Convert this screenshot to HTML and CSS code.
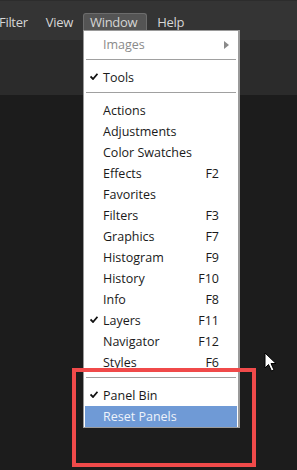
FILE: index.html
```
<!DOCTYPE html>
<html>
<head>
<meta charset="utf-8">
<link rel="stylesheet" href="styles.css">
</head>
<body>
<div class="app">
  <div class="menubar">
    <span class="mb-item first">Filter</span>
    <span class="mb-item">View</span>
    <span class="mb-item active">Window</span>
    <span class="mb-item">Help</span>
  </div>
  <div class="toolbar"></div>
  <div class="workspace"></div>

  <div class="dropdown">
    <div class="row disabled"><span class="label">Images</span><svg class="sub" width="5" height="8" viewBox="0 0 5 8"><path d="M0 0L5 4L0 8Z" fill="#8a8a8a"/></svg></div>
    <div class="sep"></div>
    <div class="row"><svg class="check" width="8" height="7" viewBox="0 0 8 7"><path d="M0.5 3.5L3 6L7.5 0.8" stroke="#111" stroke-width="1.8" fill="none"/></svg><span class="label">Tools</span></div>
    <div class="sep"></div>
    <div class="row"><span class="label">Actions</span></div>
    <div class="row"><span class="label">Adjustments</span></div>
    <div class="row"><span class="label">Color Swatches</span></div>
    <div class="row"><span class="label">Effects</span><span class="key">F2</span></div>
    <div class="row"><span class="label">Favorites</span></div>
    <div class="row"><span class="label">Filters</span><span class="key">F3</span></div>
    <div class="row"><span class="label">Graphics</span><span class="key">F7</span></div>
    <div class="row"><span class="label">Histogram</span><span class="key">F9</span></div>
    <div class="row"><span class="label">History</span><span class="key">F10</span></div>
    <div class="row"><span class="label">Info</span><span class="key">F8</span></div>
    <div class="row"><svg class="check" width="8" height="7" viewBox="0 0 8 7"><path d="M0.5 3.5L3 6L7.5 0.8" stroke="#111" stroke-width="1.8" fill="none"/></svg><span class="label">Layers</span><span class="key">F11</span></div>
    <div class="row"><span class="label">Navigator</span><span class="key">F12</span></div>
    <div class="row"><span class="label">Styles</span><span class="key">F6</span></div>
    <div class="sep"></div>
    <div class="row"><svg class="check" width="8" height="7" viewBox="0 0 8 7"><path d="M0.5 3.5L3 6L7.5 0.8" stroke="#111" stroke-width="1.8" fill="none"/></svg><span class="label">Panel Bin</span></div>
    <div class="row hl"><span class="label">Reset Panels</span></div>
  </div>

  <div class="redbox"></div>

  <svg class="cursor" width="13" height="21" viewBox="0 0 13 21"><path d="M1 1L1 16L4.5 12.5L7.5 19L10 18L7 11.5L12 11.5Z" fill="#fff" stroke="#000" stroke-width="1"/></svg>
</div>
</body>
</html>
```
FILE: styles.css
```
* { box-sizing: border-box; }
html, body { margin: 0; padding: 0; }
body {
  width: 297px;
  height: 470px;
  overflow: hidden;
  background: #1c1c1c;
  font-family: "Open Sans", "Noto Sans", sans-serif;
}
.app {
  position: relative;
  width: 297px;
  height: 470px;
  display: flex;
  flex-direction: column;
}
.menubar {
  height: 40px;
  background: #343434;
  border-top: 1px solid #2c2c2c;
  display: flex;
  align-items: flex-end;
  padding-bottom: 10px;
  gap: 2px;
  color: #d6d6d6;
  font-size: 13px;
  letter-spacing: -0.3px;
}
.mb-item {
  height: 17px;
  line-height: 16px;
  padding: 0 7px;
  border: 1px solid transparent;
  border-bottom: none;
}
.mb-item.first { margin-left: -9px; }
.mb-item.active {
  background: #545454;
  border-color: #6c6c6c;
  border-radius: 3px 3px 0 0;
  padding: 0 9px 0 6px;
}
.toolbar {
  height: 55px;
  background: #2b2b2b;
}
.workspace {
  flex: 1;
  background: #1c1c1c;
}
.dropdown {
  position: absolute;
  left: 83px;
  top: 30px;
  width: 157px;
  height: 398px;
  background: #fff;
  border: 1px solid #9a9a9a;
  border-right-width: 2px;
  padding: 3px 0 1px;
  font-size: 12.5px;
  color: #1a1a1a;
}
.row {
  position: relative;
  height: 21px;
  display: flex;
  align-items: center;
  padding: 0 18px 0 18px;
  margin: 0 1px;
}
.row .label { flex: 1; white-space: nowrap; }
.row .key { text-align: right; }
.row.disabled { color: #8a8a8a; }
.row .sub { position: absolute; right: 8px; top: 7px; }
.row .check { position: absolute; left: 5px; top: 6px; }
.row.hl {
  background: #6f9ad6;
  color: #eef3fa;
}
.sep {
  height: 1px;
  background: #a0a0a0;
  margin: 4px 2px 7px;
}
.redbox {
  position: absolute;
  left: 72px;
  top: 368px;
  width: 184px;
  height: 99px;
  border: 4px solid #f04a4a;
}
.cursor {
  position: absolute;
  left: 264px;
  top: 352px;
}
```
